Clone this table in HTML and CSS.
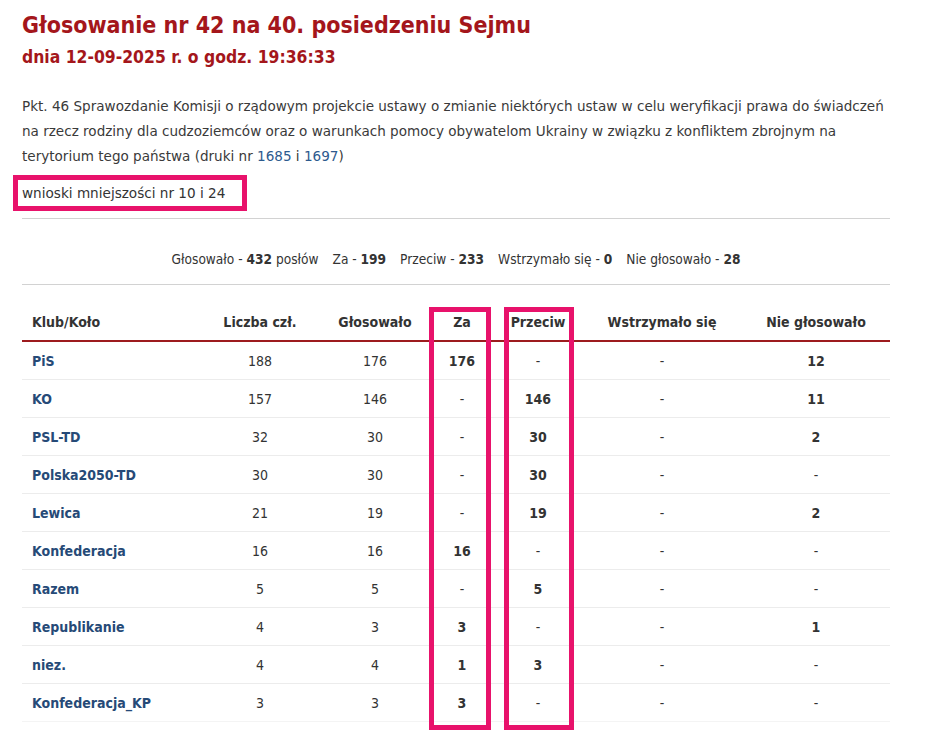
FILE: index.html
```html
<!DOCTYPE html>
<html lang="pl">
<head>
<meta charset="utf-8">
<title>Głosowanie nr 42</title>
<link rel="stylesheet" href="styles.css">
</head>
<body>
<div class="page">
  <h1 class="title">Głosowanie nr 42 na 40. posiedzeniu Sejmu</h1>
  <h2 class="subtitle">dnia 12-09-2025 r. o godz. 19:36:33</h2>
  <p class="desc">Pkt. 46 Sprawozdanie Komisji o rządowym projekcie ustawy o zmianie niektórych ustaw w celu weryfikacji prawa do świadczeń<br>na rzecz rodziny dla cudzoziemców oraz o warunkach pomocy obywatelom Ukrainy w związku z konfliktem zbrojnym na<br>terytorium tego państwa (druki nr <a href="#">1685</a> i <a href="#">1697</a>)</p>
  <div class="motion"><span class="motion-box">wnioski mniejszości nr 10 i 24</span></div>
  <hr class="rule">
  <p class="summary">Głosowało - <b>432</b> posłów<span class="gap"></span>Za - <b>199</b><span class="gap"></span>Przeciw - <b>233</b><span class="gap"></span>Wstrzymało się - <b>0</b><span class="gap"></span>Nie głosowało - <b>28</b></p>
  <hr class="rule rule-after">
  <div class="table-wrap">
    <table class="votes">
      <colgroup>
        <col class="c-club"><col class="c-num"><col class="c-voted"><col class="c-za"><col class="c-przeciw"><col class="c-wstrz"><col class="c-nie">
      </colgroup>
      <thead>
        <tr><th class="left">Klub/Koło</th><th>Liczba czł.</th><th>Głosowało</th><th>Za</th><th>Przeciw</th><th>Wstrzymało się</th><th>Nie głosowało</th></tr>
      </thead>
      <tbody>
        <tr><td class="left"><a href="#">PiS</a></td><td>188</td><td>176</td><td class="b">176</td><td>-</td><td>-</td><td class="b">12</td></tr>
        <tr><td class="left"><a href="#">KO</a></td><td>157</td><td>146</td><td>-</td><td class="b">146</td><td>-</td><td class="b">11</td></tr>
        <tr><td class="left"><a href="#">PSL-TD</a></td><td>32</td><td>30</td><td>-</td><td class="b">30</td><td>-</td><td class="b">2</td></tr>
        <tr><td class="left"><a href="#">Polska2050-TD</a></td><td>30</td><td>30</td><td>-</td><td class="b">30</td><td>-</td><td>-</td></tr>
        <tr><td class="left"><a href="#">Lewica</a></td><td>21</td><td>19</td><td>-</td><td class="b">19</td><td>-</td><td class="b">2</td></tr>
        <tr><td class="left"><a href="#">Konfederacja</a></td><td>16</td><td>16</td><td class="b">16</td><td>-</td><td>-</td><td>-</td></tr>
        <tr><td class="left"><a href="#">Razem</a></td><td>5</td><td>5</td><td>-</td><td class="b">5</td><td>-</td><td>-</td></tr>
        <tr><td class="left"><a href="#">Republikanie</a></td><td>4</td><td>3</td><td class="b">3</td><td>-</td><td>-</td><td class="b">1</td></tr>
        <tr><td class="left"><a href="#">niez.</a></td><td>4</td><td>4</td><td class="b">1</td><td class="b">3</td><td>-</td><td>-</td></tr>
        <tr><td class="left"><a href="#">Konfederacja_KP</a></td><td>3</td><td>3</td><td class="b">3</td><td>-</td><td>-</td><td>-</td></tr>
      </tbody>
    </table>
    <div class="mark mark-za"></div>
    <div class="mark mark-przeciw"></div>
  </div>
</div>
</body>
</html>
```
FILE: styles.css
```css
html, body {
  margin: 0;
  padding: 0;
  background: #ffffff;
}
body {
  min-height: 752px;
  font-family: "DejaVu Sans", Verdana, sans-serif;
  font-stretch: condensed;
  color: #333333;
}
.page {
  width: 868px;
  padding: 10px 0 30px 22px;
}
.title {
  margin: 0;
  font-size: 23px;
  line-height: 30px;
  font-weight: bold;
  color: #a4161b;
}
.subtitle {
  margin: 5px 0 0;
  font-size: 17.4px;
  line-height: 24px;
  font-weight: bold;
  color: #a4161b;
}
.desc {
  margin: 25px 0 0;
  font-size: 13.55px;
  line-height: 25px;
  font-stretch: normal;
  white-space: nowrap;
  color: #3a3a3a;
}
.desc a {
  color: #2d5a8e;
  text-decoration: none;
}
.motion {
  margin-top: 6px;
  height: 36px;
  font-size: 13.6px;
  font-stretch: normal;
  color: #333333;
}
.motion-box {
  display: inline-block;
  vertical-align: top;
  box-sizing: border-box;
  margin-left: -9px;
  width: 234px;
  height: 36px;
  line-height: 26px;
  padding-left: 4px;
  border: 5px solid #e8126b;
}
.rule {
  margin: 7px 0 0;
  border: 0;
  border-top: 1px solid #d2d2d2;
  height: 0;
}
.summary {
  margin: 30px 0 0;
  text-align: center;
  font-size: 13.6px;
  line-height: 20px;
  color: #333333;
}
.rule-after {
  margin-top: 15px;
}
.gap {
  display: inline-block;
  width: 14px;
}
.table-wrap {
  position: relative;
}
.votes {
  width: 868px;
  table-layout: fixed;
  border-collapse: collapse;
  font-size: 14px;
}
.c-club { width: 178px; }
.c-num { width: 120px; }
.c-voted { width: 110px; }
.c-za { width: 64px; }
.c-przeciw { width: 88px; }
.c-wstrz { width: 160px; }
.c-nie { width: 148px; }
.votes th {
  font-weight: bold;
  color: #333333;
  text-align: center;
  padding: 27px 0 8px;
  line-height: 20px;
  border-bottom: 2px solid #9d1b1e;
}
.votes td {
  text-align: center;
  height: 37px;
  padding: 0;
  line-height: 20px;
  border-bottom: 1px solid #ececec;
  color: #333333;
}
.votes tbody tr:last-child td {
  border-bottom: 1px solid #f4f4f4;
}
.votes .left {
  text-align: left;
  padding-left: 10px;
}
.votes td.b {
  font-weight: bold;
}
.votes td a {
  color: #264a77;
  font-weight: bold;
  text-decoration: none;
}
.mark {
  position: absolute;
  box-sizing: border-box;
  top: 22px;
  height: 423px;
  border: 5px solid #e8126b;
}
.mark-za {
  left: 407px;
  width: 62px;
}
.mark-przeciw {
  left: 482px;
  width: 70px;
}
```
